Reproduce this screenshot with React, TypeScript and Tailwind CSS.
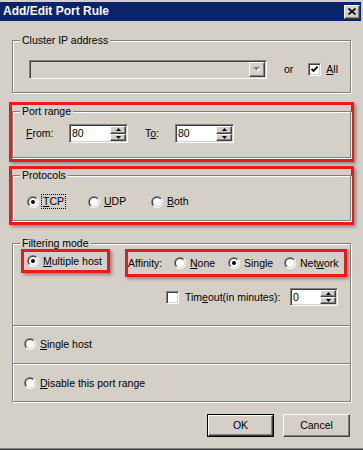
import { useId } from 'react'
import type { ReactNode } from 'react'

const sunken =
  'border border-t-[#808080] border-l-[#808080] border-b-white border-r-white shadow-[inset_1px_1px_0_#404040,inset_-1px_-1px_0_#d4d0c8]'
const raised =
  'bg-[#d4d0c8] border border-t-white border-l-white border-b-[#404040] border-r-[#404040] shadow-[inset_-1px_-1px_0_#808080]'
const redBox = 'border-[3px] border-[#e41c1c] shadow-[2px_2px_3px_rgba(0,0,0,0.35)]'

function U({ children }: { children: ReactNode }) {
  return <span className="underline underline-offset-1 decoration-1">{children}</span>
}

function Radio({ checked = false }: { checked?: boolean }) {
  const id = useId().replace(/[^a-zA-Z0-9]/g, '')
  return (
    <svg width="12" height="12" viewBox="0 0 12 12" className="shrink-0">
      <defs>
        <linearGradient id={`${id}o`} x1="0" y1="0" x2="1" y2="1">
          <stop offset="0.5" stopColor="#808080" />
          <stop offset="0.5" stopColor="#ffffff" />
        </linearGradient>
        <linearGradient id={`${id}i`} x1="0" y1="0" x2="1" y2="1">
          <stop offset="0.5" stopColor="#404040" />
          <stop offset="0.5" stopColor="#d4d0c8" />
        </linearGradient>
      </defs>
      <circle cx="6" cy="6" r="6" fill={`url(#${id}o)`} />
      <circle cx="6" cy="6" r="5" fill={`url(#${id}i)`} />
      <circle cx="6" cy="6" r="4" fill="#fff" />
      {checked && <circle cx="6" cy="6" r="2" fill="#000" />}
    </svg>
  )
}

function RadioItem({
  checked,
  focus,
  className = '',
  children,
}: {
  checked?: boolean
  focus?: boolean
  className?: string
  children: ReactNode
}) {
  return (
    <div className={`flex items-center ${className}`}>
      <Radio checked={checked} />
      <span
        className={`ml-[2px] px-[1px] border ${focus ? 'border-dotted border-black' : 'border-transparent'}`}
      >
        {children}
      </span>
    </div>
  )
}

function Check({ checked = false }: { checked?: boolean }) {
  return (
    <div className={`w-[13px] h-[13px] shrink-0 bg-white ${sunken} flex items-center justify-center`}>
      {checked && (
        <svg width="9" height="9" viewBox="0 0 9 9">
          <path d="M1.5 3.8 L3.5 5.8 L7.6 1.7" stroke="#000" strokeWidth="1.9" fill="none" />
        </svg>
      )}
    </div>
  )
}

function Tri({ down = false, color = '#000' }: { down?: boolean; color?: string }) {
  return (
    <svg width="5" height="3" viewBox="0 0 5 3">
      <polygon points={down ? '0,0 5,0 2.5,3' : '0,3 5,3 2.5,0'} fill={color} />
    </svg>
  )
}

function Spin({ value, className }: { value: string; className: string }) {
  return (
    <div className={`flex bg-white p-[1px] ${sunken} ${className}`}>
      <span className="flex-1 pl-[1px] leading-[14px]">{value}</span>
      <div className="flex flex-col w-[16px]">
        <div className={`flex-1 flex items-center justify-center ${raised}`}>
          <Tri />
        </div>
        <div className={`flex-1 flex items-center justify-center ${raised}`}>
          <Tri down />
        </div>
      </div>
    </div>
  )
}

function Group({
  label,
  className = '',
  children,
}: {
  label?: string
  className?: string
  children: ReactNode
}) {
  return (
    <fieldset
      className={`border border-[#808080] shadow-[inset_1px_1px_0_#fff,1px_1px_0_#fff] ${className}`}
    >
      {label && <legend className="ml-[7px] px-[2px] bg-[#d4d0c8] leading-[13px]">{label}</legend>}
      {children}
    </fieldset>
  )
}

function Divider() {
  return <div className="h-[2px] border-t border-[#808080] bg-white" />
}

export default function App() {
  return (
    <div className="w-[363px] h-[450px] flex flex-col bg-[#d4d0c8] pt-[2px] text-black text-[10.5px] leading-[13px] font-['Liberation_Sans',Arial,sans-serif] shadow-[inset_0_-1px_0_#404040,inset_0_-2px_0_#808080]">
      {/* title bar */}
      <div className="h-[19px] mr-[2px] flex items-center justify-between bg-[#0a246a] pl-[3px] pr-[1px]">
        <span className="text-white font-bold text-[12px] leading-[19px]">Add/Edit Port Rule</span>
        <div className={`w-[16px] h-[14px] flex items-center justify-center ${raised}`}>
          <svg width="8" height="7" viewBox="0 0 8 7">
            <path d="M0.5 0.5 L7.5 6.5 M7.5 0.5 L0.5 6.5" stroke="#000" strokeWidth="1.6" />
          </svg>
        </div>
      </div>

      <div className="flex flex-col px-[12px]">
        <Group label="Cluster IP address" className="mt-[13px]">
          <div className="flex items-center pt-[13px] pb-[13px] pl-[16px]">
            <div className={`w-[238px] h-[19px] flex justify-end p-[1px] bg-[#d4d0c8] ${sunken}`}>
              <div className={`w-[16px] h-full flex items-center justify-center ${raised}`}>
                <svg width="8" height="5" viewBox="0 0 8 5">
                  <polygon points="1,1 8,1 4.5,4.5" fill="#fff" />
                  <polygon points="0,0 7,0 3.5,3.5" fill="#808080" />
                </svg>
              </div>
            </div>
            <span className="ml-[17px]">or</span>
            <div className="ml-[15px]">
              <Check checked />
            </div>
            <span className="ml-[5px]">
              <U>A</U>ll
            </span>
          </div>
        </Group>

        <div className={`mt-[9px] -mx-[3px] pb-[1px] ${redBox}`}>
          <Group label="Port range">
            <div className="flex items-center pt-[6px] pb-[14px] pl-[13px]">
              <span className="w-[43px]">
                <U>F</U>rom:
              </span>
              <Spin value="80" className="w-[59px] h-[19px]" />
              <span className="ml-[17px] w-[30px]">
                T<U>o</U>:
              </span>
              <Spin value="80" className="w-[59px] h-[19px]" />
            </div>
          </Group>
        </div>

        <div className={`mt-[4px] -mx-[3px] pb-[1px] ${redBox}`}>
          <Group label="Protocols">
            <div className="flex items-center pt-[12px] pb-[11px] pl-[14px]">
              <RadioItem checked focus className="w-[61px]">
                <U>T</U>CP
              </RadioItem>
              <RadioItem className="w-[63px]">
                <U>U</U>DP
              </RadioItem>
              <RadioItem>
                <U>B</U>oth
              </RadioItem>
            </div>
          </Group>
        </div>

        <Group label="Filtering mode" className="mt-[12px]">
          <div className="flex flex-col -mt-[1px] pb-[19px]">
            <div className="flex items-start">
              <div className={`ml-[8px] w-[89px] h-[24px] flex items-center pl-[3px] ${redBox}`}>
                <RadioItem checked>
                  <U>M</U>ultiple host
                </RadioItem>
              </div>
              <div className={`ml-[15px] w-[222px] h-[28px] flex items-center ${redBox}`}>
                <span className="w-[46px]">Affinity:</span>
                <RadioItem className="w-[54px]">
                  <U>N</U>one
                </RadioItem>
                <RadioItem checked className="w-[56px]">
                  Sin<U>g</U>le
                </RadioItem>
                <RadioItem>
                  Net<U>w</U>ork
                </RadioItem>
              </div>
            </div>
            <div className="flex items-center mt-[11px]">
              <div className="ml-[153px]">
                <Check />
              </div>
              <span className="ml-[6px]">
                Tim<U>e</U>out(in minutes):
              </span>
              <Spin value="0" className="ml-auto mr-[12px] w-[48px] h-[18px]" />
            </div>
          </div>
          <Divider />
          <div className="h-[36px] pb-[2px] flex items-center pl-[11px]">
            <RadioItem>
              <U>S</U>ingle host
            </RadioItem>
          </div>
          <Divider />
          <div className="h-[36px] flex items-center pl-[11px]">
            <RadioItem>
              <U>D</U>isable this port range
            </RadioItem>
          </div>
        </Group>

        <div className="flex justify-end gap-[9px] mt-[12px] mr-[1px]">
          <div className="w-[67px] h-[23px] border border-black">
            <div className={`w-full h-full flex items-center justify-center ${raised}`}>OK</div>
          </div>
          <div className={`w-[67px] h-[23px] flex items-center justify-center ${raised}`}>Cancel</div>
        </div>
      </div>
    </div>
  )
}
